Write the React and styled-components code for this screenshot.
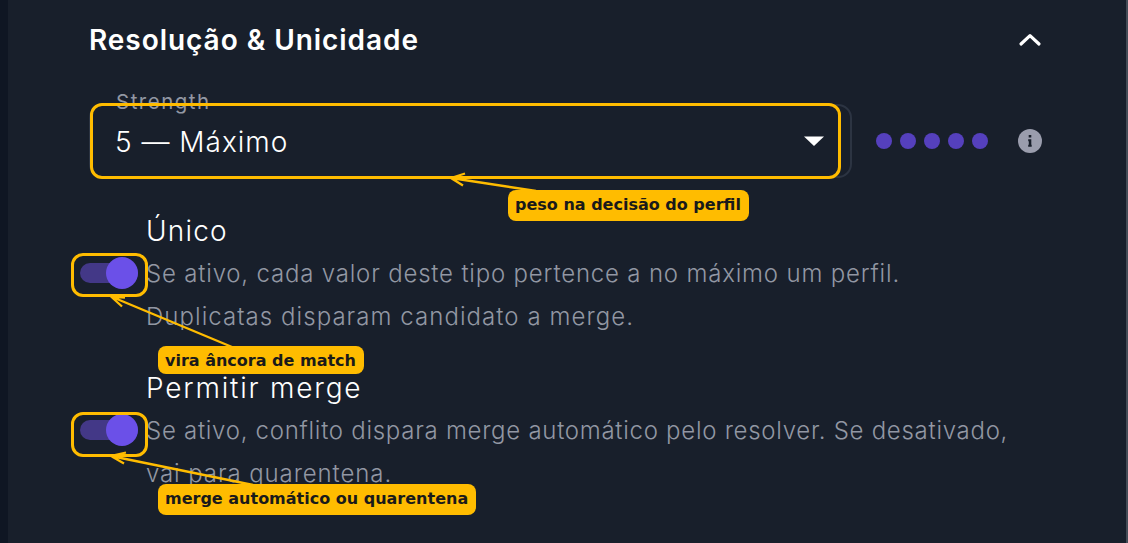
import styled, { createGlobalStyle } from "styled-components"

const cores = {
    fundo: "#181f2b",
    lateral: "#0f1623",
    borda: "#444c57",
    contorno: "#2c3442",
    texto: "#ffffff",
    apagado: "#9297a3",
    roxo: "#6b50e8",
    trilho: "#433887",
    ponto: "#5540bd",
    destaque: "#ffbc00"
}

const perfis = [
    {
        titulo: "Único",
        espacoTitulo: 1.2,
        linhas: [
            { texto: "Se ativo, cada valor deste tipo pertence a no máximo um perfil.", espaco: 0.81 },
            { texto: "Duplicatas disparam candidato a merge.", espaco: 1.05 }
        ]
    },
    {
        titulo: "Permitir merge",
        espacoTitulo: 1.8,
        linhas: [
            { texto: "Se ativo, conflito dispara merge automático pelo resolver. Se desativado,", espaco: 0.72 },
            { texto: "vai para quarentena.", espaco: 0.9 }
        ]
    }
]

const GlobalStyle = createGlobalStyle`
    * {
        box-sizing: border-box;
    }

    body {
        margin: 0;
        background: ${cores.fundo};
        font-family: "Inter", sans-serif;
        font-kerning: normal;
    }
`

const Pagina = styled.div`
    position: relative;
    width: 1128px;
    height: 543px;
    overflow: hidden;
    background: ${cores.fundo};
    border-left: 8px solid ${cores.lateral};
    border-right: 2px solid ${cores.borda};
`

const Painel = styled.section`
    height: 543px;
    padding: 16px 84px 0 81px;
    color: ${cores.texto};
`

const Cabecalho = styled.header`
    display: flex;
    align-items: center;
    justify-content: space-between;
    height: 48px;
`

const Titulo = styled.h2`
    margin: 0;
    font-size: 28px;
    font-weight: 600;
    line-height: 47px;
    letter-spacing: 0.95px;
    white-space: nowrap;
`

const IconeSeta = styled.svg`
    display: block;
    width: 24px;
    height: 24px;
`

const LinhaForca = styled.div`
    display: flex;
    align-items: center;
    margin-top: 40px;
`

const Selecao = styled.div`
    position: relative;
    display: flex;
    align-items: center;
    justify-content: space-between;
    width: 763px;
    height: 74px;
    padding: 0 26px 0 24px;
    border: 2px solid ${cores.contorno};
    border-radius: 14px;
`

const Rotulo = styled.label`
    position: absolute;
    top: -17px;
    left: 20px;
    padding: 0 5px;
    background: ${cores.fundo};
    color: ${cores.apagado};
    font-size: 20.5px;
    line-height: 26px;
    letter-spacing: 1.5px;
`

const Valor = styled.span`
    padding-top: 2px;
    font-size: 28px;
    font-weight: 300;
    letter-spacing: 1px;
`

const Triangulo = styled.svg`
    display: block;
    width: 20px;
    height: 10px;
`

const Pontos = styled.div`
    display: flex;
    gap: 8px;
    margin-left: 24px;
`

const Ponto = styled.span`
    width: 16px;
    height: 16px;
    border-radius: 50%;
    background: ${cores.ponto};
`

const IconeInfo = styled.svg`
    display: block;
    width: 24px;
    height: 24px;
    margin-left: 30px;
`

const ListaOpcoes = styled.div`
    display: flex;
    flex-direction: column;
    gap: 29px;
    margin-top: 31px;
`

const Opcao = styled.div`
    display: flex;
    align-items: center;
    gap: 8px;
    height: 128px;
    margin-left: -9px;
`

const Interruptor = styled.div`
    display: flex;
    align-items: center;
    justify-content: flex-end;
    width: 58px;
    height: 20px;
    border-radius: 10px;
    background: ${cores.trilho};
`

const Bolinha = styled.span`
    flex: none;
    width: 32px;
    height: 32px;
    border-radius: 50%;
    background: ${cores.roxo};
`

const Textos = styled.div`
    padding-top: 2px;
`

const TituloOpcao = styled.div`
    font-size: 28px;
    font-weight: 300;
    line-height: 42px;
    letter-spacing: ${props => props.$espaco}px;
`

const Descricao = styled.div`
    color: ${cores.apagado};
    font-size: 24px;
    font-weight: 300;
    line-height: 43px;
    letter-spacing: ${props => props.$espaco}px;
    white-space: nowrap;
`

/* marcações desenhadas por cima do formulário */
const Marcacoes = styled.div`
    position: absolute;
    top: 0;
    left: -8px;
    width: 1128px;
    height: 543px;
`

const Moldura = styled.div`
    position: absolute;
    left: ${props => props.$x}px;
    top: ${props => props.$y}px;
    width: ${props => props.$w}px;
    height: ${props => props.$h}px;
    border: 3px solid ${cores.destaque};
    border-radius: 12px;
`

const Flechas = styled.svg`
    position: absolute;
    top: 0;
    left: 0;
`

const Etiqueta = styled.div`
    position: absolute;
    left: ${props => props.$x}px;
    top: ${props => props.$y}px;
    width: ${props => props.$w}px;
    height: ${props => props.$h}px;
    padding-left: 7px;
    border-radius: 8px;
    background: ${cores.destaque};
    color: #1a1a1a;
    font-family: "DejaVu Sans", sans-serif;
    font-size: 16px;
    font-weight: 700;
    line-height: 30px;
    white-space: nowrap;
`

function App() {
    return (
        <>
            <GlobalStyle />
            <Pagina>
                <Painel>
                    <Cabecalho>
                        <Titulo>Resolução &amp; Unicidade</Titulo>
                        <IconeSeta viewBox="0 0 24 24">
                            <path d="M3 16 12 7.6l9 8.4" fill="none" stroke="#fff" strokeWidth="3.2" strokeLinecap="round" strokeLinejoin="round" />
                        </IconeSeta>
                    </Cabecalho>
                    <LinhaForca>
                        <Selecao>
                            <Rotulo>Strength</Rotulo>
                            <Valor>5 — Máximo</Valor>
                            <Triangulo viewBox="0 0 20 10">
                                <path d="M0 .6h20L10 10z" fill="#fff" />
                            </Triangulo>
                        </Selecao>
                        <Pontos>
                            {[1, 2, 3, 4, 5].map(e => <Ponto key={e + "-ponto"} />)}
                        </Pontos>
                        <IconeInfo viewBox="0 0 24 24">
                            <circle cx="12" cy="12" r="12" fill="#9a9dad" />
                            <path d="M10.7 6h2.6v2.4h-2.6zM10.2 10.2h3.1v5.6h.4v2h-3.5v-2h.6v-3.6h-.6z" fill={cores.fundo} />
                        </IconeInfo>
                    </LinhaForca>
                    <ListaOpcoes>
                        {perfis.map(e =>
                            <Opcao key={e.titulo}>
                                <Interruptor>
                                    <Bolinha />
                                </Interruptor>
                                <Textos>
                                    <TituloOpcao $espaco={e.espacoTitulo}>{e.titulo}</TituloOpcao>
                                    {e.linhas.map(l =>
                                        <Descricao key={l.texto} $espaco={l.espaco}>{l.texto}</Descricao>
                                    )}
                                </Textos>
                            </Opcao>
                        )}
                    </ListaOpcoes>
                </Painel>
                <Marcacoes>
                    <Moldura $x={90} $y={103} $w={751} $h={76} />
                    <Moldura $x={71} $y={253} $w={77} $h={44} />
                    <Moldura $x={71} $y={412} $w={77} $h={45} />
                    <Flechas width="1128" height="543" fill="none" stroke={cores.destaque} strokeWidth="2.3">
                        <path d="M536 191 451 178M465 173.5 451 178l12 7.5" />
                        <path d="M232 347 111 296.5M125 297.5l-14-1 11 10" />
                        <path d="M253 485 111 456M126 452.5 111 456l13 7.5" />
                    </Flechas>
                    <Etiqueta $x={508} $y={190} $w={241} $h={31}>peso na decisão do perfil</Etiqueta>
                    <Etiqueta $x={158} $y={346} $w={206} $h={28}>vira âncora de match</Etiqueta>
                    <Etiqueta $x={158} $y={484} $w={318} $h={31}>merge automático ou quarentena</Etiqueta>
                </Marcacoes>
            </Pagina>
        </>
    )
}

export default App
